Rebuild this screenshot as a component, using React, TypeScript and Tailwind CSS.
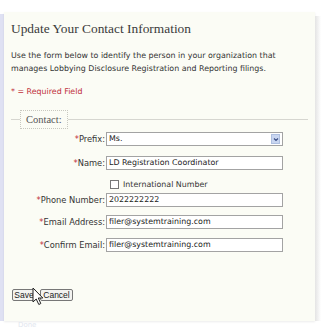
import React from "react";

const sans = { fontFamily: '"DejaVu Sans", Verdana, sans-serif' };
const serif = { fontFamily: '"Liberation Serif", Georgia, serif' };
const arial = { fontFamily: '"Liberation Sans", Arial, sans-serif' };

function Row({ label, children }: { label: string; children: React.ReactNode }) {
  return (
    <div className="flex items-center h-[14px]">
      <div className="w-[95px] text-right pr-[1px] text-[8.3px] text-[#333] whitespace-nowrap">
        <span className="text-[#c0303a]">*</span>
        {label}
      </div>
      {children}
    </div>
  );
}

function TextInput({ value }: { value: string }) {
  return (
    <div className="w-[177px] h-[14px] border border-[#a3a3a3] bg-white flex items-center px-[2px] text-[7.9px] text-[#222] leading-none">
      {value}
    </div>
  );
}

export default function App() {
  return (
    <div className="w-[330px] h-[329px] bg-white relative overflow-hidden" style={sans}>
      <div className="flex pt-[12px] h-[321px]">
        <div className="w-[4px] mt-[2px] bg-[#dfe1f3]" />
        <div className="w-[311px] bg-[#fbfcf5] flex flex-col pl-[7px] pr-[7px] shadow-[0_1px_2px_rgba(0,0,0,0.08)]">
          <div className="mt-[8px] text-[13.4px] leading-[18px] text-[#3a3a3a]" style={serif}>
            Update Your Contact Information
          </div>
          <div className="mt-[11px] text-[7.9px] leading-[13px] text-[#333] whitespace-nowrap">
            Use the form below to identify the person in your organization that
            <br />
            manages Lobbying Disclosure Registration and Reporting filings.
          </div>
          <div className="mt-[10px] text-[7.9px] leading-[13px] text-[#c0303a]">* = Required Field</div>
          <div className="mt-[12px] flex items-center h-[19px]">
            <div className="w-[9px] h-px bg-[#d6d6d0]" />
            <div className="border border-dotted border-[#c8c8c0] h-[19px] px-[5px] flex items-center text-[10.5px] text-[#555]" style={serif}>
              Contact:
            </div>
            <div className="flex-1 h-px bg-[#d6d6d0]" />
          </div>
          <div className="flex flex-col mt-[3px]">
            <Row label="Prefix:">
              <div className="w-[177px] h-[14px] border border-[#a3a3a3] bg-white flex items-center pl-[2px] pr-[2px] text-[7.9px] text-[#222] leading-none">
                <span className="flex-1">Ms.</span>
                <div className="w-[9px] h-[10px] bg-[#c9d6f1] border border-[#aebfe0] flex items-center justify-center">
                  <svg width="6" height="5" viewBox="0 0 6 5">
                    <path d="M1 1.5 L3 3.5 L5 1.5" stroke="#3b4f86" strokeWidth="1.2" fill="none" />
                  </svg>
                </div>
              </div>
            </Row>
            <div className="h-[10px]" />
            <Row label="Name:">
              <TextInput value="LD Registration Coordinator" />
            </Row>
            <div className="flex items-end h-[23px] pb-[4px] pl-[99px]">
              <div className="w-[9px] h-[9px] border border-[#777] bg-white" />
              <span className="ml-[4px] text-[7.9px] leading-[9px] text-[#333]">International Number</span>
            </div>
            <Row label="Phone Number:">
              <TextInput value="2022222222" />
            </Row>
            <div className="h-[8px]" />
            <Row label="Email Address:">
              <TextInput value="filer@systemtraining.com" />
            </Row>
            <div className="h-[9px]" />
            <Row label="Confirm Email:">
              <TextInput value="filer@systemtraining.com" />
            </Row>
          </div>
          <div className="mt-[37px] flex gap-[4px] ml-[1px]" style={arial}>
            <div className="h-[12px] w-[24px] justify-center border border-[#777] rounded-[2px] bg-[#f3f3f0] text-[8.5px] text-[#222] flex items-center">Save</div>
            <div className="h-[12px] w-[33px] justify-center border border-[#777] rounded-[2px] bg-[#f3f3f0] text-[8.5px] text-[#222] flex items-center">Cancel</div>
          </div>
        </div>
        <div className="w-[6px] mt-[4px] bg-gradient-to-r from-[#e4e4e4] to-white" />
      </div>
      <div className="absolute left-[18px] top-[320px] text-[7px] text-[#e2e6ee]">Done</div>
      <svg className="absolute left-[32px] top-[287px]" width="12" height="19" viewBox="0 0 12 19">
        <path d="M1 1 L1 15 L4.2 12 L6.8 17.5 L8.8 16.5 L6.3 11 L10.8 11 Z" fill="white" stroke="#222" strokeWidth="1" strokeLinejoin="round" />
      </svg>
    </div>
  );
}
